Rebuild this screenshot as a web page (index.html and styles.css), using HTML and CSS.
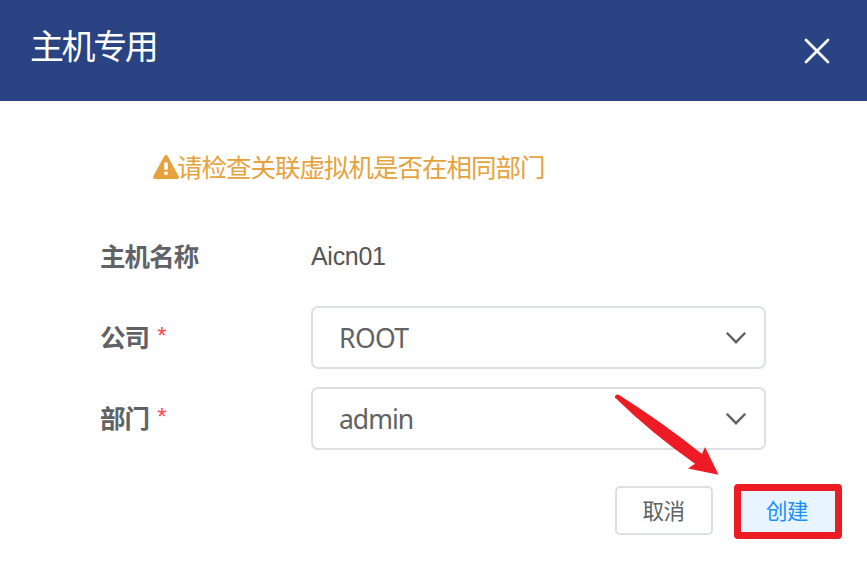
FILE: index.html
```html
<!DOCTYPE html>
<html lang="zh-CN">
<head>
<meta charset="utf-8">
<title>主机专用</title>
<link rel="stylesheet" href="styles.css">
</head>
<body>
<main class="dialog">
  <header class="header">
    <h1 class="title">主机专用</h1>
    <svg class="close" viewBox="0 0 26 26"><path d="M2 2 24 24M24 2 2 24"/></svg>
  </header>
  <p class="notice">
    <svg class="warning" viewBox="0 0 26 24"><path fill-rule="evenodd" d="M11.2 1.2Q13-1 14.8 1.2L25.7 21.300Q26.500 24 24 24H2Q-.5 24 .3 21.300ZM11.2 7.500V14.700H14.800V7.500ZM11.2 16.700V19.800H14.800V16.700Z"/></svg>
    <span>请检查关联虚拟机是否在相同部门</span>
  </p>
  <div class="form">
    <div class="row"><span class="label">主机名称</span><span class="value">Aicn01</span></div>
    <div class="row">
      <span class="label">公司<i class="star">*</i></span>
      <div class="select"><span class="company">ROOT</span><svg class="chevron" viewBox="0 0 20 12"><path d="M1.5 1.5 10 10.2 18.500 1.500"/></svg></div>
    </div>
    <div class="row">
      <span class="label">部门<i class="star">*</i></span>
      <div class="select"><span class="department">admin</span><svg class="chevron" viewBox="0 0 20 12"><path d="M1.5 1.5 10 10.2 18.500 1.500"/></svg></div>
    </div>
  </div>
  <footer class="footer">
    <button class="button cancel">取消</button>
    <button class="button create">创建</button>
  </footer>
  <svg class="arrow" viewBox="0 0 106 84"><path d="M1 2.500Q2-.5 5 1Q48 28 88 60L91 53 104.500 80.700 74 74.500 81 69.700Q36 38 2 4.500Q.5 4 1 2.500Z"/></svg>
</main>
</body>
</html>
```
FILE: styles.css
```css
* { box-sizing: border-box; }
body { margin: 0; background: #fff; }
.dialog {
  position: relative;
  height: 566px;
  overflow: hidden;
  color: #606266;
  font-family: "Liberation Sans", "Noto Sans CJK SC", sans-serif;
}
.header {
  display: flex;
  justify-content: space-between;
  height: 101px;
  padding: 21px 37px 0 30px;
  background: #294383;
  color: #fff;
}
.title {
  margin: 0;
  font: 400 34px/48px "Noto Sans CJK SC", sans-serif;
  letter-spacing: -2.4px;
}
.close {
  width: 26px;
  height: 26px;
  margin-top: 17px;
  fill: none;
  stroke: #fff;
  stroke-width: 2.700;
  stroke-linecap: round;
}
.notice {
  display: flex;
  align-items: center;
  height: 36px;
  margin: 47px 0 0 153px;
  color: #e6a23c;
  font: 25.5px/36px "Noto Sans CJK SC", sans-serif;
  letter-spacing: -1px;
}
.warning { width: 26px; height: 24px; margin: 1px -2px 0 0; fill: currentColor; }
.form { display: grid; gap: 18px; margin: 41px 0 0 101px; }
.row { display: grid; grid-template-columns: 210px 455px; align-items: center; height: 63px; }
.label {
  padding-bottom: 4px;
  margin-left: -1px;
  font: 700 25.5px/36px "Noto Sans CJK SC", sans-serif;
  letter-spacing: -.9px;
}
.star {
  margin-left: 8px;
  color: #ff4949;
  font: 400 24px/24px "Liberation Sans", sans-serif;
  vertical-align: 3px;
}
.value { color: #555; font-size: 25px; letter-spacing: -.3px; }
.select {
  display: flex;
  align-items: center;
  justify-content: space-between;
  height: 63px;
  padding: 0 18px 0 26px;
  border: 2px solid #dcdfe6;
  border-radius: 7px;
  font: 26.5px/36px "Noto Sans", sans-serif;
}
.company { letter-spacing: -.6px; }
.department { letter-spacing: -1px; }
.chevron { width: 20px; height: 12px; fill: none; stroke: #606266; stroke-width: 2.500; stroke-linecap: round; }
.footer { display: flex; align-items: flex-start; gap: 21px; margin: 34px 0 0 615px; }
.button {
  font: 400 21.500px/36px "Noto Sans CJK SC", sans-serif;
  letter-spacing: -.5px;
}
.cancel { width: 98px; height: 49px; margin-top: 2px; padding: 0 1px 1px 0; border: 2px solid #dcdfe6; border-radius: 5px; background: #fff; color: #606266; }
.create { width: 108px; height: 55px; padding: 0 2px 3px 0; border: 7px solid #ed1c24; border-radius: 4px; background: #e8f4ff; color: #1890ff; }
.arrow { position: absolute; left: 614px; top: 394px; width: 106px; height: 84px; fill: #ed1c24; }
```
